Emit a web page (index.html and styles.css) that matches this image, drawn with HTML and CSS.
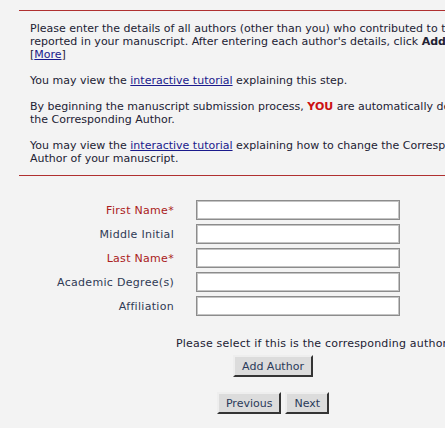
FILE: index.html
```html
<!DOCTYPE html>
<html>
<head>
    <title>Add Authors</title>
    <link rel="stylesheet" href="styles.css">
</head>
<body>
    <div class="page">
        <div class="rule"></div>

        <div class="intro">
            <p>Please enter the details of all authors (other than you) who contributed to the work<br>
            reported in your manuscript. After entering each author's details, click <b>Add Author</b>.<br>
            [<a href="#">More</a>]</p>
            <p>You may view the <a href="#">interactive tutorial</a> explaining this step.</p>
            <p>By beginning the manuscript submission process, <span class="you">YOU</span> are automatically designated as<br>
            the Corresponding Author.</p>
            <p>You may view the <a href="#">interactive tutorial</a> explaining how to change the Corresponding<br>
            Author of your manuscript.</p>
        </div>

        <div class="rule"></div>
    </div>

    <form class="author-form">
        <div class="row">
            <label class="req">First Name*</label>
            <input type="text">
        </div>
        <div class="row">
            <label>Middle Initial</label>
            <input type="text">
        </div>
        <div class="row">
            <label class="req">Last Name*</label>
            <input type="text">
        </div>
        <div class="row">
            <label>Academic Degree(s)</label>
            <input type="text">
        </div>
        <div class="row">
            <label>Affiliation</label>
            <input type="text">
        </div>
    </form>

    <p class="select-note">Please select if this is the corresponding author</p>

    <div class="actions">
        <button class="btn">Add Author</button>
    </div>
    <div class="actions nav">
        <button class="btn">Previous</button>
        <button class="btn">Next</button>
    </div>
</body>
</html>
```

FILE: styles.css
```css
body {
    margin: 0;
    background-color: #f3f3f3;
    font-family: "DejaVu Sans", Verdana, sans-serif;
    font-size: 11px;
    color: #222233;
    overflow: hidden;
}

.page {
    padding-left: 19px;
    padding-top: 10px;
    width: 700px;
}

.rule {
    border-top: 1px solid #b03030;
}

.intro {
    padding: 11px 0 10px 11px;
    white-space: nowrap;
}

.intro p {
    margin: 0 0 13px 0;
    line-height: 13px;
}

.intro p:last-child {
    margin-bottom: 0;
}

.intro a {
    color: #1a1a8c;
}

.you {
    color: #cc1111;
    font-weight: bold;
}

.author-form {
    margin: 24px 0 0 0;
    display: flex;
    flex-direction: column;
    gap: 4px;
}

.row {
    display: flex;
    align-items: center;
}

.row label {
    width: 174px;
    text-align: right;
    margin-right: 22px;
    color: #2f3a55;
    letter-spacing: 0.3px;
}

.row label.req {
    color: #aa2020;
}

.row input {
    width: 204px;
    height: 20px;
    box-sizing: border-box;
    margin: 0;
    border: 1px solid #8c8c8c;
    box-shadow: inset 0 0 0 1px #c4c4c4;
    background: #fff;
}

.select-note {
    margin: 21px 0 0 176px;
    line-height: 13px;
    white-space: nowrap;
    letter-spacing: 0.2px;
}

.actions {
    width: 300px;
    margin-left: 123px;
    display: flex;
    justify-content: center;
    gap: 4px;
    margin-top: 5px;
}

.actions.nav {
    margin-top: 15px;
}

.btn {
    font-family: "DejaVu Sans", Verdana, sans-serif;
    font-size: 11px;
    color: #2a3a5a;
    background-color: #dcdcdc;
    border: 2px outset #eeeeee;
    border-right-color: #888;
    border-bottom-color: #888;
    padding: 0 7px;
    height: 22px;
}
```
